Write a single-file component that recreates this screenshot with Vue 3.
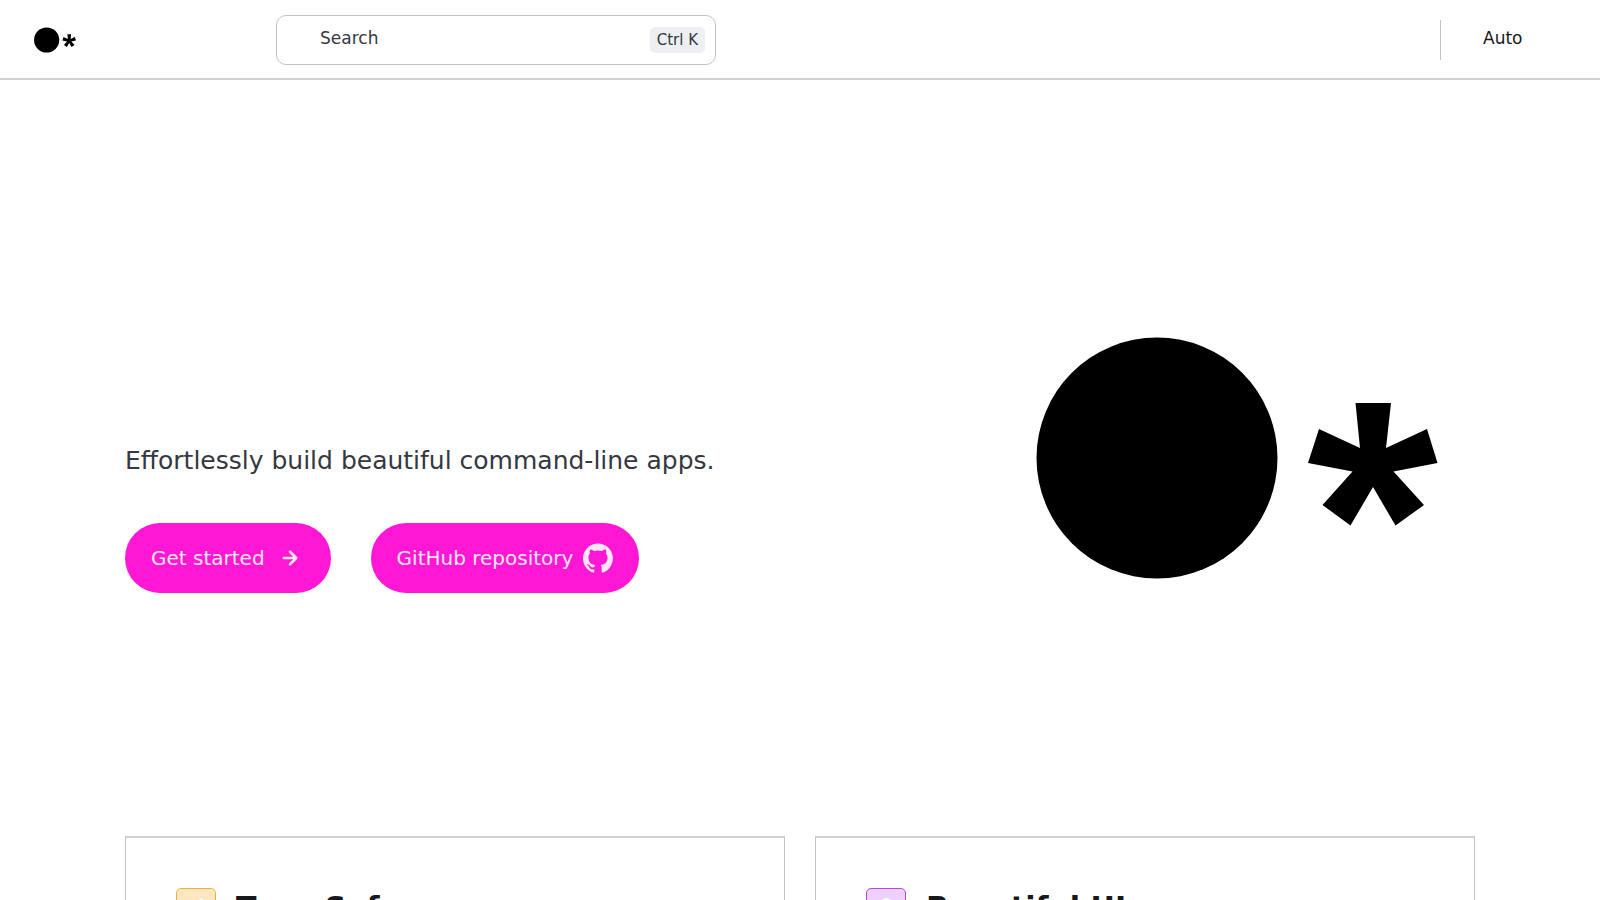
<script setup>
const cards = [
  { title: 'Type Safe', tone: 'orange', icon: 'pencil' },
  { title: 'Beautiful UI', tone: 'purple', icon: 'person' },
]
</script>

<template>
  <div class="page">
    <header class="header">
      <a class="brand" href="#" aria-label="Home">
        <svg viewBox="0 0 402 242" aria-hidden="true">
          <circle cx="121" cy="121" r="120.5" />
          <path d="M319.500 66H355l-5 45 41-19 10.500 34-44 8.500 30.500 33.500-28.500 20.500-22.500-38.500-22.500 38.500-28-20.500 30-33.500-44.500-8.500 11-34 41 19z" />
        </svg>
      </a>
      <button class="search" type="button">
        <span>Search</span>
        <kbd>Ctrl K</kbd>
      </button>
      <div class="tools">
        <select class="theme" aria-label="Select theme">
          <option>Auto</option>
          <option>Dark</option>
          <option>Light</option>
        </select>
      </div>
    </header>

    <main class="content">
      <section class="hero">
        <div class="copy">
          <p class="tagline">Effortlessly build beautiful command-line apps.</p>
          <div class="actions">
            <a class="action" href="#">
              Get started
              <svg viewBox="0 0 24 24" aria-hidden="true"><path d="M17.920 11.620a1 1 0 0 0-.210-.330l-5-5a1 1 0 0 0-1.420 1.420l3.300 3.290H7a1 1 0 0 0 0 2h7.590l-3.300 3.290a1 1 0 0 0 1.420 1.420l5-5a1 1 0 0 0 .210-1.090z" /></svg>
            </a>
            <a class="action" href="#">
              GitHub repository
              <svg viewBox="0 0 24 24" aria-hidden="true"><path d="M12 .3a12 12 0 0 0-3.800 23.380c.6.120.83-.26.83-.57L9 21.070c-3.340.72-4.040-1.610-4.040-1.610-.55-1.390-1.340-1.760-1.340-1.760-1.080-.74.090-.73.090-.73 1.200.09 1.830 1.240 1.830 1.240 1.080 1.830 2.810 1.300 3.500 1 .1-.78.420-1.310.76-1.610-2.670-.3-5.470-1.330-5.470-5.930 0-1.310.47-2.380 1.240-3.220-.14-.3-.54-1.520.1-3.180 0 0 1-.32 3.300 1.230a11.500 11.500 0 0 1 6 0c2.280-1.550 3.290-1.230 3.290-1.230.64 1.660.24 2.880.12 3.180a4.650 4.650 0 0 1 1.230 3.220c0 4.610-2.800 5.630-5.480 5.920.42.36.81 1.100.81 2.220l-.01 3.290c0 .31.200.69.820.57A12 12 0 0 0 12 .3z" /></svg>
            </a>
          </div>
        </div>
        <svg class="mark" viewBox="0 0 402 242" role="img" aria-label="Logo">
          <circle cx="121" cy="121" r="120.500" />
          <path d="M319.500 66H355l-5 45 41-19 10.500 34-44 8.500 30.500 33.500-28.500 20.500-22.500-38.500-22.500 38.500-28-20.500 30-33.500-44.500-8.500 11-34 41 19z" />
        </svg>
      </section>

      <section class="cards">
        <article v-for="card in cards" :key="card.title" class="card">
          <h2>
            <span class="badge" :class="card.tone">
              <svg v-if="card.icon === 'pencil'" viewBox="0 0 24 24" aria-hidden="true"><path d="M22 7.240a1 1 0 0 0-.290-.710l-4.240-4.240a1 1 0 0 0-1.420 0l-2.830 2.830L2.290 16.050A1 1 0 0 0 2 16.760V21a1 1 0 0 0 1 1h4.240a1 1 0 0 0 .760-.290L21.710 8a1 1 0 0 0 .290-.760zM6.830 20H4v-2.830l9.930-9.930 2.830 2.830zM18.170 8.660l-2.830-2.830 1.420-1.410 2.820 2.820z" /></svg>
              <svg v-else viewBox="0 0 24 24" aria-hidden="true"><circle cx="12" cy="8" r="6" /><path d="M2 22a10 10 0 0 1 20 0z" /></svg>
            </span>
            <span>{{ card.title }}</span>
          </h2>
        </article>
      </section>
    </main>
  </div>
</template>

<style>
body {
  margin: 0;
  background: #fff;
}
</style>

<style scoped>
.page {
  color: #17181c;
  font-family: "DejaVu Sans", sans-serif;
}
.header {
  display: grid;
  grid-template-columns: 242px 440px 1fr;
  align-items: center;
  box-sizing: border-box;
  height: 80px;
  padding: 2px 30px 0 34px;
  border-bottom: 2px solid #cfd0d2;
}
.brand svg {
  display: block;
  width: 42px;
  height: 26px;
}
.search {
  display: flex;
  align-items: center;
  justify-content: space-between;
  box-sizing: border-box;
  height: 50px;
  padding: 0 10px 0 43px;
  border: 1px solid #c0c2c7;
  border-radius: 10px;
  background: #fff;
  color: #353841;
  font: 17px/24px "DejaVu Sans", sans-serif;
}
.search span {
  padding-bottom: 4px;
}
kbd {
  padding: 2px 7px;
  border-radius: 5px;
  background: #eeeff2;
  font: 15px/22px "DejaVu Sans", sans-serif;
}
.tools {
  display: flex;
  align-items: center;
  justify-content: flex-end;
}
.theme {
  appearance: none;
  width: 130px;
  height: 40px;
  padding: 0 0 4px 42px;
  border: 0;
  border-left: 1px solid #c0c2c7;
  background: transparent;
  color: #17181c;
  font: 17px/24px "DejaVu Sans", sans-serif;
}
.content {
  max-width: 1350px;
  margin: 0 auto;
}
.hero {
  display: flex;
  align-items: center;
  justify-content: space-between;
  height: 756px;
}
.copy {
  padding-top: 115px;
}
.tagline {
  margin: 0 0 40px;
  color: #353841;
  font-size: 25px;
  line-height: 44px;
}
.actions {
  display: flex;
  gap: 40px;
}
.action {
  display: flex;
  align-items: center;
  gap: 10px;
  padding: 20px 26px;
  border-radius: 35px;
  background: #ff17d5;
  color: #ffe5fa;
  font-size: 20px;
  line-height: 30px;
  text-decoration: none;
}
.action svg {
  width: 30px;
  height: 30px;
  fill: currentColor;
}
.mark {
  width: 402px;
  margin-right: 37px;
}
.cards {
  display: grid;
  grid-template-columns: 1fr 1fr;
  gap: 30px;
}
.card {
  padding: 50px;
  border: 1px solid #c0c2c7;
  border-top: 2px solid #cfd0d2;
}
.card h2 {
  display: flex;
  align-items: center;
  gap: 20px;
  margin: 0;
  font-size: 30px;
  line-height: 40px;
}
.badge {
  display: flex;
  align-items: center;
  justify-content: center;
  box-sizing: border-box;
  width: 40px;
  height: 40px;
  border: 1px solid;
  border-radius: 5px;
}
.badge svg {
  width: 25px;
  height: 25px;
  fill: #fff;
}
.orange {
  border-color: #eeb13e;
  background: #fbe6c0;
}
.purple {
  border-color: #b34ae0;
  background: #efcffb;
}
</style>
